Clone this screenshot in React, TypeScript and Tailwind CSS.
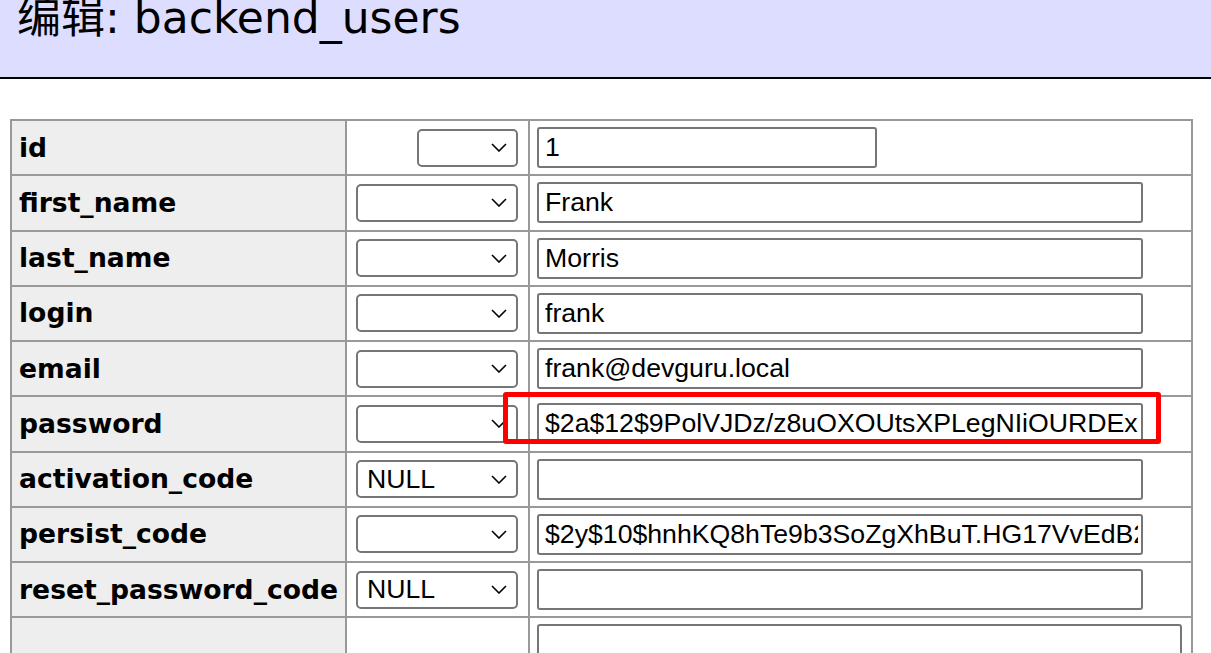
import React from "react";

type Field = {
  name: string;
  fn: string;
  value: string;
  narrow?: boolean;
  short?: boolean;
  mark?: boolean;
};

const fields: Field[] = [
  { name: "id", fn: "", value: "1", narrow: true, short: true },
  { name: "first_name", fn: "", value: "Frank" },
  { name: "last_name", fn: "", value: "Morris" },
  { name: "login", fn: "", value: "frank" },
  { name: "email", fn: "", value: "frank@devguru.local" },
  { name: "password", fn: "", value: "$2a$12$9PolVJDz/z8uOXOUtsXPLegNIiOURDEx", mark: true },
  { name: "activation_code", fn: "NULL", value: "" },
  { name: "persist_code", fn: "", value: "$2y$10$hnhKQ8hTe9b3SoZgXhBuT.HG17VvEdB2ya" },
  { name: "reset_password_code", fn: "NULL", value: "" },
];

function Chevron() {
  return (
    <svg width="16" height="9" viewBox="0 0 16 9" className="shrink-0">
      <polyline points="1,1 8,8 15,1" fill="none" stroke="#000" strokeWidth="1.6" />
    </svg>
  );
}

function FnSelect({ value, narrow }: { value: string; narrow?: boolean }) {
  return (
    <div
      className={
        (narrow ? "w-[101px]" : "w-[162px]") +
        " h-[38px] border-2 border-[#767676] rounded-[5px] bg-white flex items-center justify-between pl-[9px] pr-[9px]"
      }
    >
      <span className="text-[26.67px] leading-none text-black">{value}</span>
      <Chevron />
    </div>
  );
}

function App() {
  const input =
    "h-[41px] border-2 border-[#767676] rounded-[3px] bg-white pl-[6px] pr-[3px] text-[26.67px] text-black outline-none font-['Liberation_Sans',Arial,sans-serif]";

  return (
    <div className="min-h-screen bg-white font-['DejaVu_Sans','Noto_Sans_CJK_SC',sans-serif] text-black">
      <header className="h-[79px] bg-[#ddddff] border-b-2 border-black pl-[17px] overflow-hidden">
        <h2 className="-mt-[4px] text-[44px] leading-[44px] font-normal">编辑: backend_users</h2>
      </header>

      <div className="pt-[40px] pl-[10px]">
        <div className="w-[1183px] grid grid-cols-[333px_181px_661px] auto-rows-[53.25px] gap-[2px] p-[2px] bg-[#999999]">
          {fields.map((f) => (
            <React.Fragment key={f.name}>
              <div className="bg-[#eeeeee] flex items-center pl-[7px] text-[26.6px] font-bold">
                {f.name}
              </div>
              <div className="bg-white flex items-center justify-end pl-[9px] pr-[10px] font-['Liberation_Sans',Arial,sans-serif]">
                <FnSelect value={f.fn} narrow={f.narrow} />
              </div>
              <div className="bg-white flex items-center pl-[7px] relative">
                <input
                  readOnly
                  value={f.value}
                  className={input + (f.short ? " w-[340px]" : " w-[606px]")}
                />
                {f.mark && (
                  <div className="absolute -left-[27px] top-[-5px] w-[658px] h-[52px] border-[5px] border-[#ff0000] rounded-[3px] pointer-events-none" />
                )}
              </div>
            </React.Fragment>
          ))}
          <div className="bg-[#eeeeee]" />
          <div className="bg-white" />
          <div className="bg-white pl-[7px] pt-[6px]">
            <textarea
              readOnly
              className="w-[645px] h-[80px] border-2 border-[#767676] rounded-[3px] bg-white resize-none outline-none"
            />
          </div>
        </div>
      </div>
    </div>
  );
}

export default App;
